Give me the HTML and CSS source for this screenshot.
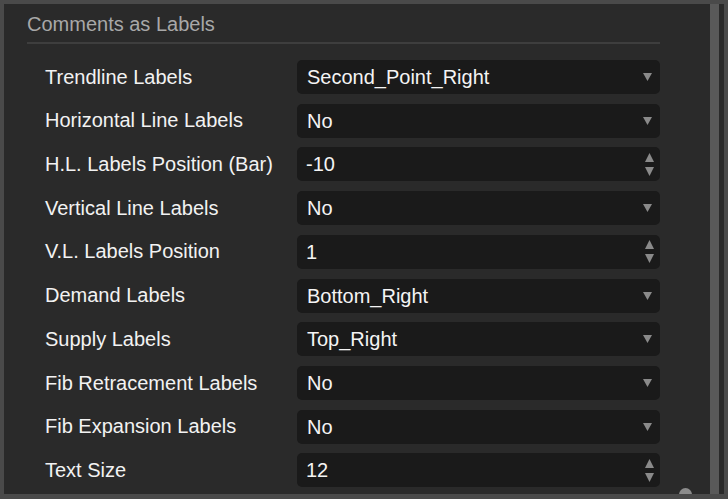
FILE: index.html
```html
<!DOCTYPE html>
<html>
<head>
<meta charset="utf-8">
<link rel="stylesheet" href="styles.css">
</head>
<body>
<div class="window">
  <div class="panel">
    <div class="section">
      <div class="section-title">Comments as Labels</div>
      <div class="rows">
        <div class="row"><span class="label">Trendline Labels</span><div class="field select"><span class="value">Second_Point_Right</span><svg class="caret" width="9" height="8" viewBox="0 0 9 8"><path d="M0 0H9L4.5 8Z"/></svg></div></div>
        <div class="row"><span class="label">Horizontal Line Labels</span><div class="field select"><span class="value">No</span><svg class="caret" width="9" height="8" viewBox="0 0 9 8"><path d="M0 0H9L4.5 8Z"/></svg></div></div>
        <div class="row"><span class="label">H.L. Labels Position (Bar)</span><div class="field number"><span class="value num">-10</span><svg class="spin" width="9" height="23" viewBox="0 0 9 23"><path d="M4.5 0L9 9H0Z"/><path d="M0 14H9L4.5 23Z"/></svg></div></div>
        <div class="row"><span class="label">Vertical Line Labels</span><div class="field select"><span class="value">No</span><svg class="caret" width="9" height="8" viewBox="0 0 9 8"><path d="M0 0H9L4.5 8Z"/></svg></div></div>
        <div class="row"><span class="label">V.L. Labels Position</span><div class="field number"><span class="value num">1</span><svg class="spin" width="9" height="23" viewBox="0 0 9 23"><path d="M4.5 0L9 9H0Z"/><path d="M0 14H9L4.5 23Z"/></svg></div></div>
        <div class="row"><span class="label">Demand Labels</span><div class="field select"><span class="value">Bottom_Right</span><svg class="caret" width="9" height="8" viewBox="0 0 9 8"><path d="M0 0H9L4.5 8Z"/></svg></div></div>
        <div class="row"><span class="label">Supply Labels</span><div class="field select"><span class="value">Top_Right</span><svg class="caret" width="9" height="8" viewBox="0 0 9 8"><path d="M0 0H9L4.5 8Z"/></svg></div></div>
        <div class="row"><span class="label">Fib Retracement Labels</span><div class="field select"><span class="value">No</span><svg class="caret" width="9" height="8" viewBox="0 0 9 8"><path d="M0 0H9L4.5 8Z"/></svg></div></div>
        <div class="row"><span class="label">Fib Expansion Labels</span><div class="field select"><span class="value">No</span><svg class="caret" width="9" height="8" viewBox="0 0 9 8"><path d="M0 0H9L4.5 8Z"/></svg></div></div>
        <div class="row"><span class="label">Text Size</span><div class="field number"><span class="value num">12</span><svg class="spin" width="9" height="23" viewBox="0 0 9 23"><path d="M4.5 0L9 9H0Z"/><path d="M0 14H9L4.5 23Z"/></svg></div></div>
      </div>
    </div>
    <div class="handle"></div>
  </div>
  <div class="scrollbar"></div>
  <div class="gutter"></div>
</div>
</body>
</html>
```
FILE: styles.css
```css
html, body {
  margin: 0;
  padding: 0;
}
body {
  background: #4a4a4a;
  font-family: "Liberation Sans", Arial, sans-serif;
  width: 728px;
  height: 499px;
  overflow: hidden;
}
.window {
  display: flex;
  margin: 4px 4px 5px 4px;
  height: 490px;
}
.panel {
  position: relative;
  flex: 1;
  background: #2a2a2a;
  overflow: hidden;
}
.scrollbar {
  width: 9px;
  background: #595959;
}
.gutter {
  width: 5px;
  background: #2a2a2a;
}
.section {
  margin-left: 23px;
  width: 633px;
  padding-top: 9px;
}
.section-title {
  font-size: 20px;
  line-height: 23px;
  color: #a8a8a8;
  padding-bottom: 6px;
  border-bottom: 2px solid #3e3e3e;
}
.rows {
  display: flex;
  flex-direction: column;
  gap: 9.72px;
  padding-top: 16px;
}
.row {
  display: grid;
  grid-template-columns: 252px 363px;
  padding-left: 18px;
  align-items: center;
  height: 34px;
}
.label {
  font-size: 20px;
  color: #f2f2f2;
}
.field {
  height: 34px;
  background: #1a1a1a;
  border-radius: 5px;
  display: flex;
  align-items: center;
  justify-content: space-between;
  padding: 0 8px 0 10px;
}
.field.number {
  padding: 0 6px 0 9px;
}
.value {
  font-size: 20px;
  line-height: 34px;
  color: #f4f4f4;
}
.caret, .spin {
  fill: #8a8a8a;
}
.handle {
  position: absolute;
  left: 675px;
  bottom: -7px;
  width: 13px;
  height: 13px;
  border-radius: 50%;
  background: #8c8c8c;
}
```
